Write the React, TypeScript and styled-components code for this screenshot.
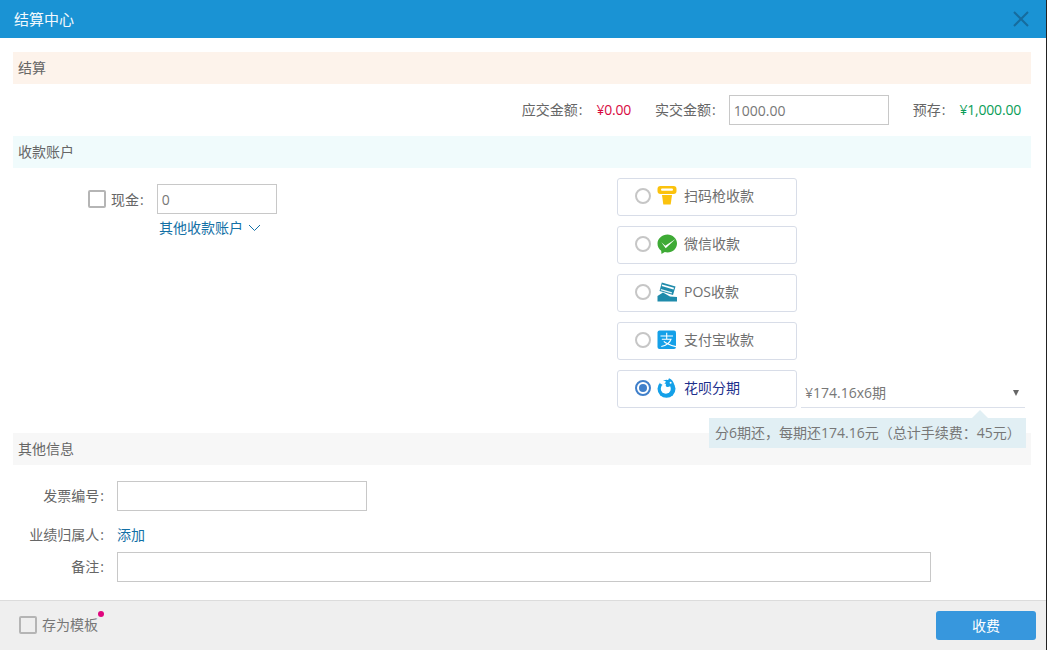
import React from "react"
import styled, { createGlobalStyle } from "styled-components"

const Global = createGlobalStyle`
    html, body { margin:0; padding:0; background:#fff; }
    body { font-family:"Open Sans","Noto Sans CJK SC",sans-serif; font-size:14px; color:#666; }
`
const Dialog = styled.div`
    width:1046px;
    height:650px;
    border-right:1px solid #222;
    display:flex;
    flex-direction:column;
    overflow:hidden;
`
const Header = styled.div`
    height:38px;
    flex:none;
    background:#1a93d4;
    display:flex;
    align-items:center;
    justify-content:space-between;
    padding:0 17px 0 14px;
    color:#fff;
`
const HeaderTitle = styled.div`
    font-size:15px;
    line-height:36px;
    color:#f2f9fd;
`
const CloseIcon = styled.svg`
    width:16px;
    height:16px;
`
const Body = styled.div`
    flex:1;
    padding:14px 15px 0 13px;
`
const Section = styled.div<{ $bg: string }>`
    height:32px;
    line-height:31px;
    padding-left:5px;
    font-size:14px;
    color:#666;
    background:${p => p.$bg};
`
const Totals = styled.div`
    height:30px;
    margin:11px 0;
    display:flex;
    justify-content:flex-end;
    align-items:center;
    padding-right:10px;
    color:#666;
    line-height:32px;
`
const Colon = styled.span`
    padding:0 1px;
`
const Amount = styled.span<{ $color: string }>`
    color:${p => p.$color};
    margin-left:13px;
    letter-spacing:-0.2px;
`
const PaidLabel = styled.span`
    margin:0 12px 0 24px;
`
const SavedLabel = styled.span`
    margin-left:24px;
`
const TextInput = styled.div<{ $w: number }>`
    width:${p => p.$w}px;
    height:30px;
    flex:none;
    box-sizing:border-box;
    border:1px solid #c8c8c8;
    line-height:29px;
    padding-left:4px;
    color:#777;
    background:#fff;
`
const Accounts = styled.div`
    height:265px;
    display:flex;
`
const CashColumn = styled.div`
    width:604px;
    flex:none;
    padding:16px 0 0 75px;
    box-sizing:border-box;
`
const CashRow = styled.div`
    display:flex;
    align-items:center;
`
const Check = styled.span`
    width:18px;
    height:18px;
    box-sizing:border-box;
    border:2px solid #b5b5b5;
    border-radius:2px;
    flex:none;
`
const CashLabel = styled.span`
    margin:0 12px 0 5px;
`
const MoreLink = styled.div`
    margin:5px 0 0 71px;
    color:#1370a6;
    font-size:14px;
    line-height:18px;
    display:flex;
    align-items:center;
    gap:5px;
`
const Methods = styled.div`
    padding-top:10px;
    display:flex;
    flex-direction:column;
    gap:10px;
`
const MethodRow = styled.div`
    position:relative;
    display:flex;
`
const Method = styled.div`
    width:180px;
    height:38px;
    box-sizing:border-box;
    border:1px solid #d8dde8;
    border-radius:3px;
    display:flex;
    align-items:center;
    padding:0 0 2px 17px;
    flex:none;
`
const Radio = styled.span<{ $on?: boolean }>`
    width:16px;
    height:16px;
    box-sizing:border-box;
    border-radius:50%;
    border:2px solid ${p => (p.$on ? "#3f7fca" : "#c6c6c6")};
    flex:none;
    display:flex;
    align-items:center;
    justify-content:center;
    &::after {
        content:"";
        width:8px;
        height:8px;
        border-radius:50%;
        background:${p => (p.$on ? "#3f7fca" : "transparent")};
    }
`
const MethodIcon = styled.svg`
    width:20px;
    height:20px;
    margin-left:6px;
    flex:none;
`
const MethodName = styled.span<{ $on?: boolean }>`
    margin-left:7px;
    font-size:14px;
    line-height:20px;
    color:${p => (p.$on ? "#1d2f8c" : "#6f6f6f")};
`
const Select = styled.div`
    width:224px;
    height:38px;
    box-sizing:border-box;
    margin-left:4px;
    border-bottom:1px solid #dbe0ea;
    display:flex;
    align-items:flex-end;
    justify-content:space-between;
    padding:0 6px 4px 4px;
    font-size:14px;
    color:#777;
    line-height:20px;
`
const Caret = styled.span`
    width:0;
    height:0;
    border-left:3px solid transparent;
    border-right:3px solid transparent;
    border-top:6px solid #666;
    margin-bottom:7px;
`
const Tip = styled.div`
    position:absolute;
    left:92px;
    top:48px;
    width:317px;
    height:30px;
    line-height:30px;
    box-sizing:border-box;
    padding-left:6px;
    background:#e1eff4;
    color:#777;
    font-size:14px;
    white-space:nowrap;
    z-index:2;
    &::before {
        content:"";
        position:absolute;
        left:263px;
        top:-8px;
        border-left:8px solid transparent;
        border-right:8px solid transparent;
        border-bottom:8px solid #e1eff4;
    }
`
const Form = styled.div`
    padding-top:16px;
`
const FormRow = styled.div<{ $h: number }>`
    height:${p => p.$h}px;
    box-sizing:border-box;
    display:flex;
    align-items:center;
    line-height:20px;
`
const OwnerRow = styled(FormRow)`
    padding-top:6px;
`
const FormLabel = styled.div`
    width:92px;
    margin-right:12px;
    text-align:right;
    font-size:14px;
    color:#666;
    white-space:nowrap;
`
const AddLink = styled.span`
    color:#1370a6;
    font-size:14px;
`
const Footer = styled.div`
    height:50px;
    flex:none;
    box-sizing:border-box;
    background:#efefef;
    border-top:1px solid #dcdcdc;
    display:flex;
    align-items:center;
    justify-content:space-between;
    padding:0 10px 0 19px;
`
const Template = styled.div`
    display:flex;
    align-items:center;
    gap:5px;
    position:relative;
    color:#777;
    line-height:20px;
    margin-top:-2px;
    &::after {
        content:"";
        position:absolute;
        right:-6px;
        top:-4px;
        width:6px;
        height:6px;
        border-radius:50%;
        background:#e0067e;
    }
`
const Charge = styled.button`
    width:100px;
    height:29px;
    margin-top:-1px;
    border:0;
    border-radius:3px;
    background:#3797dd;
    color:#fff;
    font:inherit;
    font-size:14px;
`

const ScanIcon = () => (
    <MethodIcon viewBox="0 0 20 20">
        <rect x="0.5" y="0" width="19" height="8" rx="3" fill="#fbc20d" />
        <rect x="4" y="2.600" width="12" height="2.200" rx="1.100" fill="#fff" />
        <path d="M5 9h10l-1.300 9.500h-7.400z" fill="#fbc20d" />
    </MethodIcon>
)
const WechatIcon = () => (
    <MethodIcon viewBox="0 0 20 20">
        <path d="M10.500 0.500c5 0 9.500 4 9.500 9s-4.300 9-9.500 9c-1 0-1.900-.1-2.700-.4L4.500 20l-.3-3.300C1.700 15 .5 12.500.5 9.500c0-5 4.800-9 10-9z" fill="#3eaa35" />
        <path d="M4.300 8.300l4 3.400L18.500 5l-9.800 9.300z" fill="#fff" />
    </MethodIcon>
)
const PosIcon = () => (
    <MethodIcon viewBox="0 0 20 20">
        <path d="M4.800 0.500L18.500 4.500 16 13l-5-1.400L6.300 10 2.500 9z" fill="#1f8bab" />
        <path d="M5.200 2.500L17 5.800l-.5 1.600L4.700 4.100z" fill="#fff" />
        <path d="M4 7l11 3.200-.4 1.200L3.600 8.200z" fill="#e8f4f8" />
        <path d="M0.500 19.500V14l5.500-3.500L13 14.500l7 .5v4.500z" fill="#1f8bab" />
    </MethodIcon>
)
const AlipayIcon = () => (
    <MethodIcon viewBox="0 0 20 20">
        <rect x="0.500" y="0.500" width="18.500" height="18.500" rx="2" fill="#14a0e8" />
        <path d="M3.500 6h12.500M9.700 2.800v6M4.800 9.300h9.200c-1.300 3.800-4.800 6.300-9.700 7.200M6.800 11.300c2.500 2.600 7.300 4 12.200 5.300" fill="none" stroke="#fff" strokeWidth="1.100" />
    </MethodIcon>
)
const HuabeiIcon = () => (
    <MethodIcon viewBox="0 0 20 20">
        <circle cx="9.500" cy="10.800" r="9" fill="#14a0e8" />
        <circle cx="8.800" cy="10.800" r="5" fill="#fff" />
        <path d="M3.800 1.200L9 3.500 6.500 7.500 2.500 5z" fill="#fff" />
        <path d="M12 0.300c2.800 1 4.800 3.500 5 6.700l-6 2c-1.800.3-2.800-1.200-2-3C9.500 4.500 11 3 12 .3z" fill="#14a0e8" />
        <circle cx="13.600" cy="4.800" r="1" fill="#fff" />
    </MethodIcon>
)

const methods = [
    { name: "扫码枪收款", icon: <ScanIcon /> },
    { name: "微信收款", icon: <WechatIcon /> },
    { name: "POS收款", icon: <PosIcon /> },
    { name: "支付宝收款", icon: <AlipayIcon /> },
]

const tipText = "分6期还\uFF0C每期还174.16元\uFF08总计手续费\uFF1A45元\uFF09"

const App: React.FC = () => {
    return (
        <>
            <Global />
            <Dialog>
                <Header>
                    <HeaderTitle>结算中心</HeaderTitle>
                    <CloseIcon viewBox="0 0 16 16">
                        <path d="M1 1l14 14M15 1L1 15" stroke="#166c9e" strokeWidth="2" fill="none" />
                    </CloseIcon>
                </Header>
                <Body>
                    <Section $bg="#fdf3eb">结算</Section>
                    <Totals>
                        <span>应交金额<Colon>:</Colon></span>
                        <Amount $color="#d8093f">¥0.00</Amount>
                        <PaidLabel>实交金额<Colon>:</Colon></PaidLabel>
                        <TextInput $w={160}>1000.00</TextInput>
                        <SavedLabel>预存<Colon>:</Colon></SavedLabel>
                        <Amount $color="#0a9d58">¥1,000.00</Amount>
                    </Totals>
                    <Section $bg="#f0fbfc">收款账户</Section>
                    <Accounts>
                        <CashColumn>
                            <CashRow>
                                <Check />
                                <CashLabel>现金<Colon>:</Colon></CashLabel>
                                <TextInput $w={120}>0</TextInput>
                            </CashRow>
                            <MoreLink>
                                其他收款账户
                                <svg width="13" height="8" viewBox="0 0 13 8">
                                    <path d="M1 1l5.500 5.500L12 1" fill="none" stroke="#1370a6" strokeWidth="1" />
                                </svg>
                            </MoreLink>
                        </CashColumn>
                        <Methods>
                            {methods.map(m => (
                                <Method key={m.name}>
                                    <Radio />
                                    {m.icon}
                                    <MethodName>{m.name}</MethodName>
                                </Method>
                            ))}
                            <MethodRow>
                                <Method>
                                    <Radio $on />
                                    <HuabeiIcon />
                                    <MethodName $on>花呗分期</MethodName>
                                </Method>
                                <Select>
                                    ¥174.16x6期
                                    <Caret />
                                </Select>
                                <Tip>{tipText}</Tip>
                            </MethodRow>
                        </Methods>
                    </Accounts>
                    <Section $bg="#f7f7f7">其他信息</Section>
                    <Form>
                        <FormRow $h={30}>
                            <FormLabel>发票编号<Colon>:</Colon></FormLabel>
                            <TextInput $w={250} />
                        </FormRow>
                        <OwnerRow $h={41}>
                            <FormLabel>业绩归属人<Colon>:</Colon></FormLabel>
                            <AddLink>添加</AddLink>
                        </OwnerRow>
                        <FormRow $h={30}>
                            <FormLabel>备注<Colon>:</Colon></FormLabel>
                            <TextInput $w={814} />
                        </FormRow>
                    </Form>
                </Body>
                <Footer>
                    <Template>
                        <Check />
                        存为模板
                    </Template>
                    <Charge>收费</Charge>
                </Footer>
            </Dialog>
        </>
    )
}
export default App
